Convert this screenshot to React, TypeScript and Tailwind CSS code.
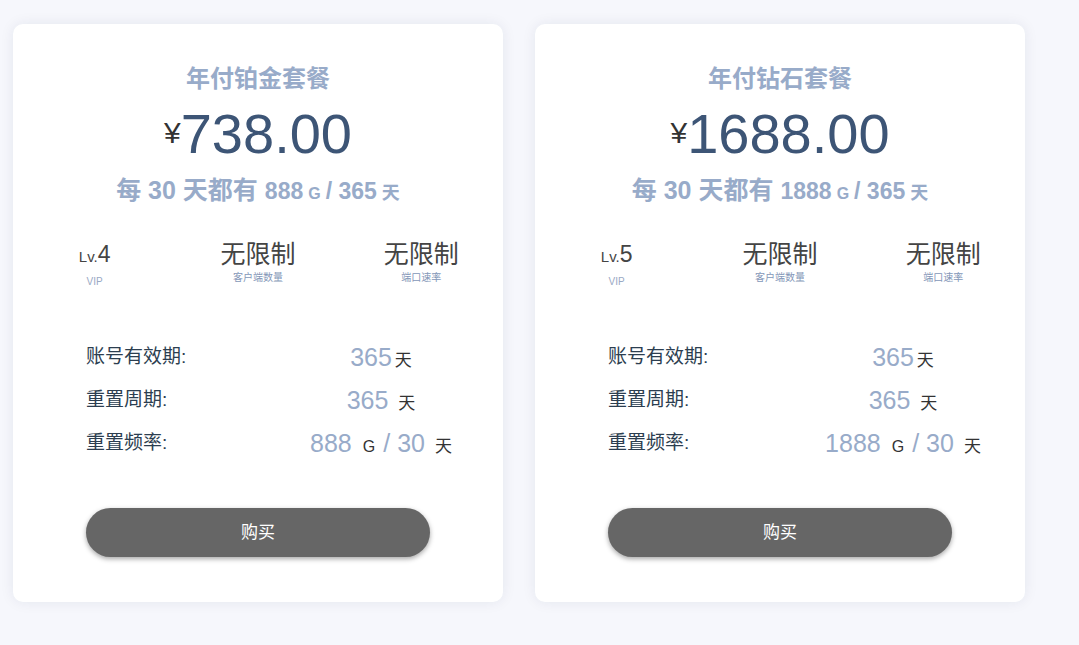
import React from "react";

type Plan = {
  title: string;
  price: string;
  quota: string;
  level: number;
};

const plans: Plan[] = [
  { title: "年付铂金套餐", price: "738.00", quota: "888", level: 4 },
  { title: "年付钻石套餐", price: "1688.00", quota: "1888", level: 5 },
];

const cjk = "font-['Liberation_Sans','Noto_Sans_CJK_SC',sans-serif]";

const PlanCard = ({ plan }: { plan: Plan }) => {
  return (
    <div className="w-[490px] h-[578px] shrink-0 rounded-[10px] bg-white pt-[40px] shadow-[0_0_14px_rgba(30,40,80,0.08)]">
      <div className="text-center text-[24px] leading-[30px] font-bold text-[#98abc9]">{plan.title}</div>
      <div className="mt-[7px] flex items-center justify-center leading-[64px] text-[#3d5576]">
        <span className="mb-[2px] text-[30px] text-[#333]">¥</span>
        <span className="text-[56px]">{plan.price}</span>
      </div>
      <div className="mt-[8px] flex items-baseline justify-center whitespace-nowrap leading-[30px] font-bold text-[#98abc9]">
        <span className="text-[25px]">每 30 天都有</span>
        <span className="ml-[7px] text-[23px]">{plan.quota}</span>
        <span className="ml-[5px] text-[16px]">G</span>
        <span className="ml-[5px] text-[23px]">/ 365</span>
        <span className="ml-[5px] text-[18px]">天</span>
      </div>

      <div className="mt-[29px] grid grid-cols-3 text-center">
        <div>
          <div className="leading-[32px] text-[#444]">
            <span className="text-[15px]">Lv.</span>
            <span className="text-[23px]">{plan.level}</span>
          </div>
          <div className="mt-[2px] text-[10px] leading-[14px] text-[#9aa9c4]">VIP</div>
        </div>
        <div>
          <div className="text-[25px] leading-[32px] text-[#444]">无限制</div>
          <div className="mt-[1px] text-[10px] leading-[14px] text-[#8497b8]">客户端数量</div>
        </div>
        <div>
          <div className="text-[25px] leading-[32px] text-[#444]">无限制</div>
          <div className="mt-[1px] text-[10px] leading-[14px] text-[#8497b8]">端口速率</div>
        </div>
      </div>

      <div className="ml-[73px] mt-[47px] w-[390px]">
        <Row label="账号有效期:">
          <span className="text-[25px] text-[#98abc9]">365</span>
          <span className="ml-[3px] text-[17px] text-[#333]">天</span>
        </Row>
        <Row label="重置周期:">
          <span className="text-[25px] text-[#98abc9]">365</span>
          <span className="ml-[10px] text-[17px] text-[#333]">天</span>
        </Row>
        <Row label="重置频率:">
          <span className="text-[25px] text-[#98abc9]">{plan.quota}</span>
          <span className="ml-[11px] text-[16px] text-[#333]">G</span>
          <span className="ml-[8px] text-[25px] text-[#98abc9]">/ 30</span>
          <span className="ml-[10px] text-[17px] text-[#333]">天</span>
        </Row>
      </div>

      <div className="mt-[43px] px-[73px]">
        <button className="h-[49px] w-[344px] rounded-full bg-[#666] text-[17px] text-white shadow-[0_2px_5px_rgba(0,0,0,0.35)]">
          购买
        </button>
      </div>
    </div>
  );
};

const Row = ({ label, children }: { label: string; children: React.ReactNode }) => (
  <div className="grid h-[43px] grid-cols-[200px_1fr] items-center whitespace-nowrap">
    <div className="text-[19px] text-[#2c3e50]">{label}</div>
    <div className="flex items-baseline justify-center">{children}</div>
  </div>
);

export default function App() {
  return (
    <div className={`${cjk} min-h-screen bg-[#f6f7fc] pt-[24px] pl-[13px]`}>
      <div className="flex gap-[32px]">
        {plans.map((p) => (
          <PlanCard key={p.title} plan={p} />
        ))}
      </div>
    </div>
  );
}
